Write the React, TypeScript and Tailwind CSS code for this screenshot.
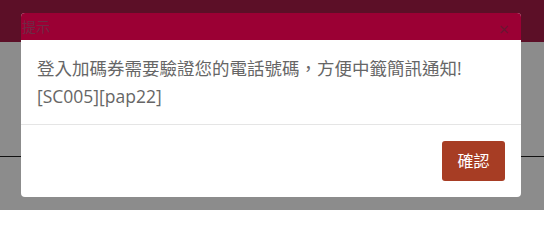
export default function App() {
  return (
    <div className="relative w-[544px] h-[210px] overflow-hidden bg-[#8c8c8c] font-['Open_Sans','Noto_Sans_CJK_TC',sans-serif]">
      {/* page behind the backdrop */}
      <div className="h-[42px] bg-[#5c0f27]" />
      <div className="mt-[114px] h-px bg-[#111]" />

      {/* dialog */}
      <div className="absolute left-[21px] top-[13px] w-[500px] rounded-[4px] bg-white overflow-hidden">
        <div className="flex h-[27px] items-center justify-between bg-[#9b0034] pl-px pr-[12px]">
          <span className="text-[14px] leading-none text-[#6f2a45]">提示</span>
          <span className="text-[18px] leading-none text-[#6a1731] mt-[4px]">×</span>
        </div>
        <div className="px-4 py-[14px] text-[17.5px] leading-[28px] text-[#666]">
          <p>登入加碼券需要驗證您的電話號碼，方便中籤簡訊通知!</p>
          <p>[SC005][pap22]</p>
        </div>
        <div className="flex justify-end border-t border-[#e5e5e5] p-4">
          <button className="h-[40px] w-[63px] rounded-[3px] bg-[#a73d24] text-[16px] text-white">
            確認
          </button>
        </div>
      </div>
    </div>
  );
}
